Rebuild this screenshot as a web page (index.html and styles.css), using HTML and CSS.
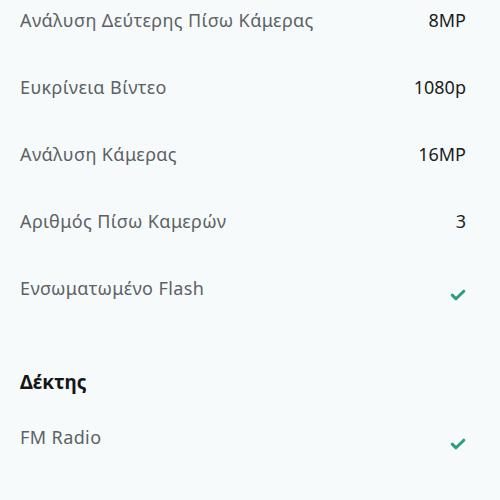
FILE: index.html
```html
<!DOCTYPE html>
<html lang="el">
<head>
<meta charset="utf-8">
<link rel="stylesheet" href="styles.css">
</head>
<body>
<div class="specs">
  <div class="row"><span class="label">Ανάλυση Δεύτερης Πίσω Κάμερας</span><span class="value">8MP</span></div>
  <div class="row"><span class="label">Ευκρίνεια Βίντεο</span><span class="value">1080p</span></div>
  <div class="row"><span class="label">Ανάλυση Κάμερας</span><span class="value">16MP</span></div>
  <div class="row"><span class="label">Αριθμός Πίσω Καμερών</span><span class="value">3</span></div>
  <div class="row"><span class="label">Ενσωματωμένο Flash</span><span class="value check"><svg width="16" height="12" viewBox="0 0 16 12"><path d="M2.2 6.2l3.8 3.6 7.8-7.6" fill="none" stroke="#2e9e78" stroke-width="3" stroke-linecap="round" stroke-linejoin="round"/></svg></span></div>
  <h3 class="section">Δέκτης</h3>
  <div class="row"><span class="label">FM Radio</span><span class="value check"><svg width="16" height="12" viewBox="0 0 16 12"><path d="M2.2 6.2l3.8 3.6 7.8-7.6" fill="none" stroke="#2e9e78" stroke-width="3" stroke-linecap="round" stroke-linejoin="round"/></svg></span></div>
</div>
</body>
</html>
```
FILE: styles.css
```css
html, body {
  margin: 0;
  background: #f7fafb;
}
body {
  font-family: "Noto Sans", "Open Sans", sans-serif;
}
.specs {
  padding: 8px 34px 0 20px;
  display: flex;
  flex-direction: column;
}
.row {
  display: flex;
  justify-content: space-between;
  align-items: flex-start;
  height: 24px;
  line-height: 24px;
  margin-bottom: 43px;
  font-size: 18px;
}
.label {
  color: #5c6166;
  letter-spacing: 0.4px;
}
.value {
  color: #1b1d1f;
}
.check {
  padding-top: 13px;
  padding-right: 0;
  line-height: 0;
}
.section {
  margin: 27px 0 31px;
  font-size: 19px;
  font-weight: 700;
  line-height: 24px;
  color: #141618;
}
```
